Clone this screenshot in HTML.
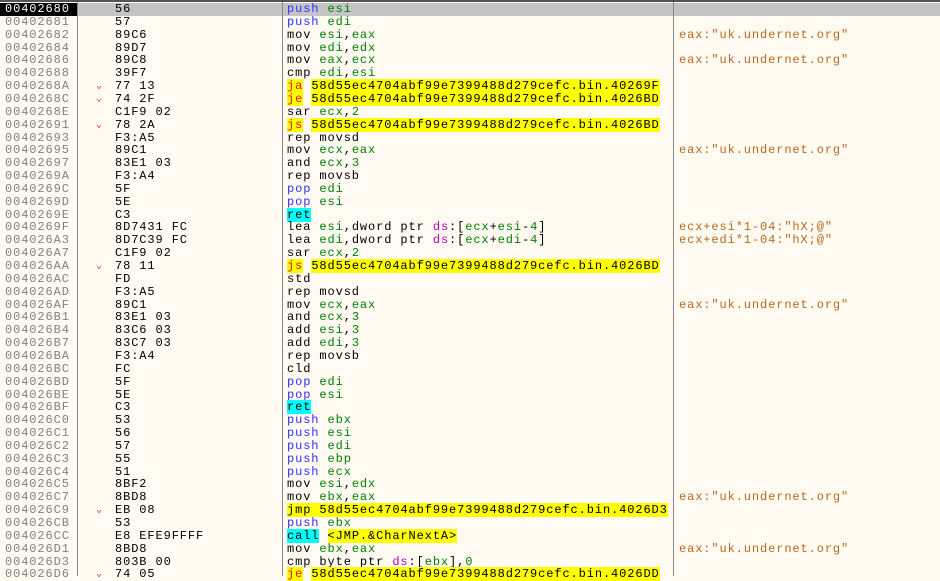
<!DOCTYPE html>
<html><head><meta charset="utf-8"><style>
body{margin:0;width:940px;height:576px;background:#fffaf2;overflow:hidden;position:relative;font-family:"Liberation Mono","DejaVu Sans Mono",monospace;font-size:12px;letter-spacing:0.9px}
.top{position:absolute;left:0;top:0;width:940px;height:2px;background:#555}
.vl{position:absolute;top:2px;bottom:0;width:1px;background:#888}
.r{position:absolute;left:0;width:940px;height:13px;line-height:13px;white-space:pre}
.r span{position:absolute;top:0}
.a{left:5px;color:#808080}
.b{left:115px;color:#000}
.ar{left:96px;color:#e03030;font-size:10px}
.i{left:287px;color:#000}
.c{left:679px;color:#b8691e}
.g{color:#008000}.bl{color:#3030ff}.rd{color:#f01010}.m{color:#c000c0}
.y{background:#ffff00}.cy{background:#00ffff}
.sel{background:#c4c4c4}
.sel .a{left:0;width:77px;padding-left:5px;box-sizing:border-box;background:#000;color:#fff}
</style></head><body>
<div class="top"></div>
<div id="rows"></div>
<div class="vl" style="left:77px"></div>
<div class="vl" style="left:282px"></div>
<div class="vl" style="left:673px"></div>
<script>
var E='eax:"uk.undernet.org"',J='58d55ec4704abf99e7399488d279cefc.bin.';
function g(s){return '<i class="g" style="font-style:normal">'+s+'</i>'}
var R=[
['00402680','56','',`<b class="bl" style="font-weight:normal">push</b> ${g('esi')}`,''],
['00402681','57','',`<b class="bl" style="font-weight:normal">push</b> ${g('edi')}`,''],
['00402682','89C6','',`mov ${g('esi')},${g('eax')}`,E],
['00402684','89D7','',`mov ${g('edi')},${g('edx')}`,''],
['00402686','89C8','',`mov ${g('eax')},${g('ecx')}`,E],
['00402688','39F7','',`cmp ${g('edi')},${g('esi')}`,''],
['0040268A','77 13','v',`<b class="y rd" style="font-weight:normal">ja</b> <b class="y" style="font-weight:normal">${J}40269F</b>`,''],
['0040268C','74 2F','v',`<b class="y rd" style="font-weight:normal">je</b> <b class="y" style="font-weight:normal">${J}4026BD</b>`,''],
['0040268E','C1F9 02','',`sar ${g('ecx')},${g('2')}`,''],
['00402691','78 2A','v',`<b class="y rd" style="font-weight:normal">js</b> <b class="y" style="font-weight:normal">${J}4026BD</b>`,''],
['00402693','F3:A5','',`rep movsd`,''],
['00402695','89C1','',`mov ${g('ecx')},${g('eax')}`,E],
['00402697','83E1 03','',`and ${g('ecx')},${g('3')}`,''],
['0040269A','F3:A4','',`rep movsb`,''],
['0040269C','5F','',`<b class="bl" style="font-weight:normal">pop</b> ${g('edi')}`,''],
['0040269D','5E','',`<b class="bl" style="font-weight:normal">pop</b> ${g('esi')}`,''],
['0040269E','C3','',`<b class="cy" style="font-weight:normal">ret</b>`,''],
['0040269F','8D7431 FC','',`lea ${g('esi')},dword ptr <b class="m" style="font-weight:normal">ds</b>:[${g('ecx')}+${g('esi')}-${g('4')}]`,'ecx+esi*1-04:"hX;@"'],
['004026A3','8D7C39 FC','',`lea ${g('edi')},dword ptr <b class="m" style="font-weight:normal">ds</b>:[${g('ecx')}+${g('edi')}-${g('4')}]`,'ecx+edi*1-04:"hX;@"'],
['004026A7','C1F9 02','',`sar ${g('ecx')},${g('2')}`,''],
['004026AA','78 11','v',`<b class="y rd" style="font-weight:normal">js</b> <b class="y" style="font-weight:normal">${J}4026BD</b>`,''],
['004026AC','FD','',`std`,''],
['004026AD','F3:A5','',`rep movsd`,''],
['004026AF','89C1','',`mov ${g('ecx')},${g('eax')}`,E],
['004026B1','83E1 03','',`and ${g('ecx')},${g('3')}`,''],
['004026B4','83C6 03','',`add ${g('esi')},${g('3')}`,''],
['004026B7','83C7 03','',`add ${g('edi')},${g('3')}`,''],
['004026BA','F3:A4','',`rep movsb`,''],
['004026BC','FC','',`cld`,''],
['004026BD','5F','',`<b class="bl" style="font-weight:normal">pop</b> ${g('edi')}`,''],
['004026BE','5E','',`<b class="bl" style="font-weight:normal">pop</b> ${g('esi')}`,''],
['004026BF','C3','',`<b class="cy" style="font-weight:normal">ret</b>`,''],
['004026C0','53','',`<b class="bl" style="font-weight:normal">push</b> ${g('ebx')}`,''],
['004026C1','56','',`<b class="bl" style="font-weight:normal">push</b> ${g('esi')}`,''],
['004026C2','57','',`<b class="bl" style="font-weight:normal">push</b> ${g('edi')}`,''],
['004026C3','55','',`<b class="bl" style="font-weight:normal">push</b> ${g('ebp')}`,''],
['004026C4','51','',`<b class="bl" style="font-weight:normal">push</b> ${g('ecx')}`,''],
['004026C5','8BF2','',`mov ${g('esi')},${g('edx')}`,''],
['004026C7','8BD8','',`mov ${g('ebx')},${g('eax')}`,E],
['004026C9','EB 08','v',`<b class="y" style="font-weight:normal">jmp ${J}4026D3</b>`,''],
['004026CB','53','',`<b class="bl" style="font-weight:normal">push</b> ${g('ebx')}`,''],
['004026CC','E8 EFE9FFFF','',`<b class="cy" style="font-weight:normal">call</b> <b class="y" style="font-weight:normal">&lt;JMP.&amp;CharNextA&gt;</b>`,''],
['004026D1','8BD8','',`mov ${g('ebx')},${g('eax')}`,E],
['004026D3','803B 00','',`cmp byte ptr <b class="m" style="font-weight:normal">ds</b>:[${g('ebx')}],${g('0')}`,''],
['004026D6','74 05','v',`<b class="y rd" style="font-weight:normal">je</b> <b class="y" style="font-weight:normal">${J}4026DD</b>`,'']
];
var h='';
R.forEach(function(r,k){
 h+='<div class="r'+(k==0?' sel':'')+'" style="top:'+(3+k*12.85).toFixed(1)+'px">'
 +'<span class="a">'+r[0]+'</span>'
 +(r[2]?'<span class="ar">&#8964;</span>':'')
 +'<span class="b">'+r[1]+'</span><span class="i">'+r[3]+'</span><span class="c">'+r[4]+'</span></div>';
});
document.getElementById('rows').innerHTML=h;
</script>
</body></html>
